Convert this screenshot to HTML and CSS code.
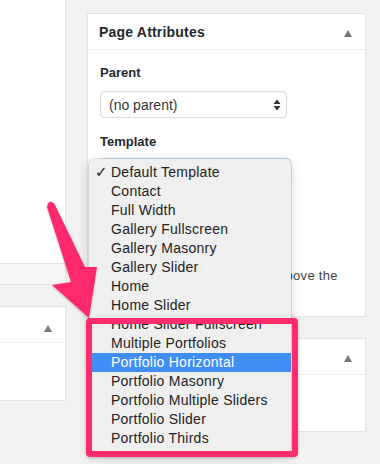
FILE: index.html
```html
<!DOCTYPE html>
<html>
<head>
<meta charset="utf-8">
<link rel="stylesheet" href="styles.css">
</head>
<body>
<div class="page">
  <div class="left-col">
    <div class="editor"></div>
    <div class="status"></div>
    <div class="side-box">
      <div class="side-head"><span class="toggle"></span></div>
    </div>
  </div>
  <div class="right-col">
    <div class="box attrs">
      <div class="box-head">
        <h2 class="box-title">Page Attributes</h2>
        <span class="toggle"></span>
      </div>
      <div class="box-body">
        <div class="label label-parent">Parent</div>
        <div class="select">
          <span class="select-text">(no parent)</span>
          <svg class="select-arrows" width="8" height="12" viewBox="0 0 8 12"><path d="M4 0.5 L7.5 5 L0.5 5 Z M4 11.5 L7.5 7 L0.5 7 Z" fill="#333"/></svg>
        </div>
        <div class="label label-template">Template</div>
        <div class="select select-focus"></div>
        <div class="order-space"></div>
        <p class="help">Need help? Use the Help tab above the screen title.</p>
      </div>
    </div>
    <div class="box box2">
      <div class="box-head"><span class="toggle"></span></div>
    </div>
  </div>
</div>

<div class="menu">
  <div class="item checked"><span class="check">✓</span>Default Template</div>
  <div class="item">Contact</div>
  <div class="item">Full Width</div>
  <div class="item">Gallery Fullscreen</div>
  <div class="item">Gallery Masonry</div>
  <div class="item">Gallery Slider</div>
  <div class="item">Home</div>
  <div class="item">Home Slider</div>
  <div class="item">Home Slider Fullscreen</div>
  <div class="item">Multiple Portfolios</div>
  <div class="item active">Portfolio Horizontal</div>
  <div class="item">Portfolio Masonry</div>
  <div class="item">Portfolio Multiple Sliders</div>
  <div class="item">Portfolio Slider</div>
  <div class="item">Portfolio Thirds</div>
</div>

<div class="highlight-frame"></div>

<svg class="annot-arrow" width="380" height="464" viewBox="0 0 380 464">
  <defs>
    <filter id="sh" x="-20%" y="-20%" width="140%" height="140%">
      <feDropShadow dx="0" dy="1" stdDeviation="1.2" flood-color="#000" flood-opacity="0.25"/>
    </filter>
  </defs>
  <path d="M47 207 Q48 201 52 202 Q54 203 55 205 L85 267 L97 267 L89 318 L52 285 L71 282 Z" fill="#fe2c6d" filter="url(#sh)"/>
</svg>
</body>
</html>
```

FILE: styles.css
```css
* { box-sizing: border-box; }

html, body {
  margin: 0;
  padding: 0;
}

body {
  width: 380px;
  height: 464px;
  overflow: hidden;
  background: #f1f1f1;
  font-family: "Liberation Sans", Arial, Helvetica, sans-serif;
  color: #23282d;
  position: relative;
}

.page {
  display: flex;
  align-items: flex-start;
}

/* left column */
.left-col {
  width: 66px;
  display: flex;
  flex-direction: column;
}

.editor {
  height: 263px;
  background: #fff;
  border-right: 1px solid #e3e3e3;
}

.status {
  height: 22px;
  background: #f6f6f6;
  border: 1px solid #e3e3e3;
  border-left: 0;
}

.side-box {
  margin-top: 21px;
  height: 95px;
  background: #fff;
  border: 1px solid #e3e3e3;
  border-left: 0;
}

.side-head {
  height: 36px;
  border-bottom: 1px solid #eee;
  display: flex;
  justify-content: flex-end;
  align-items: center;
  padding-right: 13px;
  padding-top: 5px;
}

/* right column */
.right-col {
  margin-left: 21px;
  padding-top: 13px;
  width: 279px;
  display: flex;
  flex-direction: column;
}

.box {
  background: #fff;
  border: 1px solid #e3e3e3;
}

.attrs { height: 304px; }

.box2 {
  margin-top: 21px;
  height: 94px;
}

.box-head {
  height: 36px;
  border-bottom: 1px solid #eee;
  display: flex;
  align-items: center;
  justify-content: flex-end;
  padding: 0 13px 0 11px;
}

.attrs .box-head { justify-content: space-between; }

.box-title {
  margin: 0;
  font-size: 14px;
  font-weight: bold;
  line-height: 18px;
  color: #23282d;
  letter-spacing: 0.2px;
}

.toggle {
  width: 0;
  height: 0;
  border-left: 4.5px solid transparent;
  border-right: 4.5px solid transparent;
  border-bottom: 7px solid #72777c;
  margin-top: 3px;
}

.box-body {
  padding: 14px 12px 0 12px;
}

.label {
  font-size: 13px;
  font-weight: bold;
  line-height: 18px;
  color: #23282d;
}

.label-parent { margin-bottom: 9px; }
.label-template { margin-top: 15px; margin-bottom: 8px; }

.select {
  position: relative;
  width: 187px;
  height: 27px;
  border: 1px solid #ddd;
  border-radius: 4px;
  background: #fff;
  box-shadow: inset 0 1px 2px rgba(0,0,0,0.05);
  display: flex;
  align-items: center;
  padding-left: 8px;
  font-size: 14px;
  color: #32373c;
}

.select-arrows {
  position: absolute;
  right: 5px;
  top: 7px;
}

.select-focus {
  width: 190px;
  height: 28px;
  border-color: #5b9dd9;
  box-shadow: 0 0 2px rgba(30,140,190,0.8);
}

.order-space {
  height: 66px;
}

.help {
  margin: 14px 0 0 0;
  font-size: 13px;
  line-height: 18px;
  color: #444;
  letter-spacing: 0.27px;
}

/* dropdown menu */
.menu {
  position: absolute;
  left: 89px;
  top: 159px;
  width: 202px;
  padding: 4px 0;
  background: #efefef;
  border-radius: 5px;
  box-shadow: 0 0 0 1px rgba(0,0,0,0.1), 0 4px 12px rgba(0,0,0,0.18);
}

.item {
  position: relative;
  height: 19px;
  line-height: 19px;
  padding-left: 22px;
  font-size: 14px;
  color: #222;
  white-space: nowrap;
  letter-spacing: 0.25px;
}

.check {
  position: absolute;
  left: 6px;
  top: 0;
  font-family: "DejaVu Sans", sans-serif;
  font-size: 15px;
}

.item.active {
  background: #3f8ff7;
  color: #fff;
}

/* annotation */
.highlight-frame {
  position: absolute;
  left: 86px;
  top: 318px;
  width: 212px;
  height: 139px;
  border: 6px solid #fe2c6d;
  border-radius: 4px;
  box-shadow: 0 1px 3px rgba(0,0,0,0.2);
}

.annot-arrow {
  position: absolute;
  left: 0;
  top: 0;
  pointer-events: none;
}
```
